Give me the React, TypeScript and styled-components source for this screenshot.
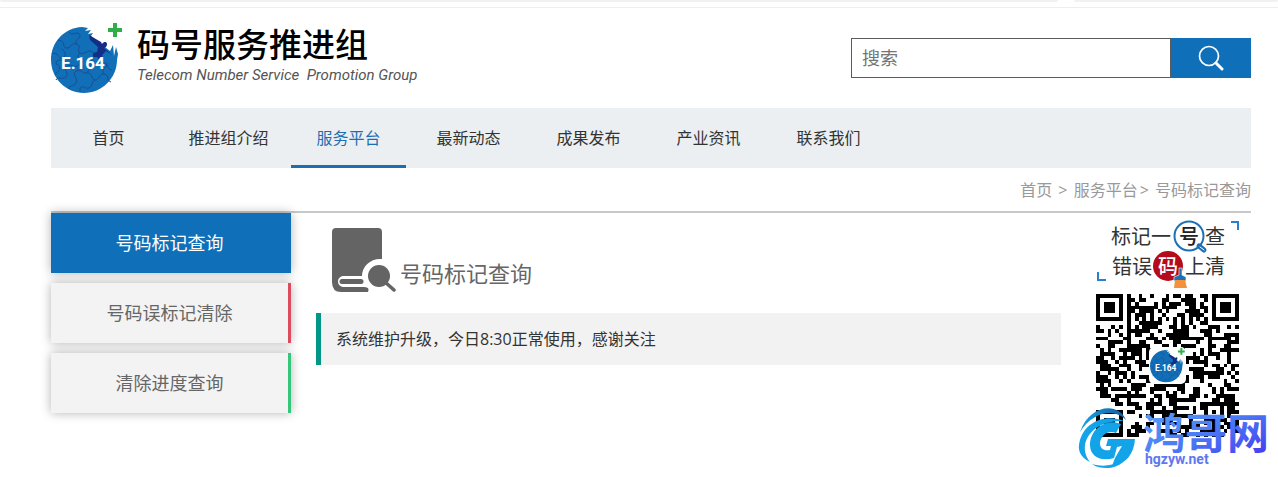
import React from "react";
import styled, { createGlobalStyle } from "styled-components";

const SANS = '"Open Sans", "Noto Sans CJK SC", sans-serif';
const BLUE = "#0f70b9";

const GlobalStyle = createGlobalStyle`
  *, *::before, *::after { box-sizing: border-box; }
  body {
    margin: 0;
    background: #fff;
    color: #333;
    font: 16px/24px ${SANS};
  }
  a { color: inherit; text-decoration: none; }
  ul, ol { list-style: none; margin: 0; padding: 0; }
`;

const TopStrip = styled.div`
  display: flex;
  gap: 16px;
  height: 8px;
  border-bottom: 1px solid #eeeeee;
`;

const StripBlock = styled.div<{ $wide?: boolean }>`
  flex: ${(p) => (p.$wide ? "1 1 auto" : "0 0 204px")};
  height: 2px;
  background: #f1f1f1;
  border-radius: 0 0 3px 3px;
`;

const Page = styled.div`
  position: relative;
  padding: 0 27px 38px 51px;
`;

const Header = styled.header`
  display: flex;
  justify-content: space-between;
  align-items: center;
  height: 100px;
`;

const Brand = styled.a`
  display: flex;
  gap: 12px;
  color: #000;
`;

const BrandText = styled.div`
  display: flex;
  flex-direction: column;
`;

const BrandName = styled.strong`
  font-size: 33px;
  line-height: 44px;
  font-weight: 500;
`;

const BrandSub = styled.em`
  font: italic 15px/16px Roboto, "Liberation Sans", sans-serif;
  color: #555;
  white-space: pre;
`;

const Search = styled.form`
  display: flex;
  width: 400px;
  height: 40px;
`;

const SearchInput = styled.input`
  flex: 1;
  min-width: 0;
  padding: 0 10px;
  border: 1px solid #5b5b5f;
  border-radius: 0;
  background: #fff;
  font: 18px/24px ${SANS};
  outline: none;
  &::placeholder { color: #757575; opacity: 1; }
`;

const SearchButton = styled.button`
  display: flex;
  align-items: center;
  justify-content: center;
  width: 80px;
  padding: 0;
  border: 0;
  background: ${BLUE};
  cursor: pointer;
`;

const Nav = styled.nav`
  background: #ebeff2;
`;

const NavList = styled.ul`
  display: flex;
  gap: 5px;
`;

const NavLink = styled.a<{ $active?: boolean }>`
  display: block;
  width: 115px;
  height: 60px;
  line-height: 60px;
  text-align: center;
  color: ${(p) => (p.$active ? "#1c6eb0" : "#333")};
  border-bottom: 3px solid ${(p) => (p.$active ? "#1c6eb0" : "transparent")};
`;

const Crumbs = styled.nav`
  height: 45px;
  line-height: 44px;
  text-align: right;
  color: #999;
  border-bottom: 2px solid #c8c8c8;
`;

const CrumbSeparator = styled.span`
  padding: 0 2px;
`;

const Content = styled.div`
  display: flex;
  align-items: flex-start;
`;

const SideMenu = styled.ul`
  display: flex;
  flex-direction: column;
  gap: 10px;
  flex: 0 0 240px;
`;

const SideLink = styled.a<{ $accent: string; $active?: boolean }>`
  display: block;
  height: 60px;
  line-height: 60px;
  font-size: 18px;
  text-align: center;
  color: ${(p) => (p.$active ? "#fff" : "#666")};
  background: ${(p) => (p.$active ? BLUE : "#f3f3f3")};
  border-right: 3px solid ${(p) => p.$accent};
  box-shadow: 0 0 10px rgba(0, 0, 0, 0.3);
`;

const Main = styled.main`
  flex: 1;
  margin: 0 35px 0 25px;
`;

const Heading = styled.h1`
  display: flex;
  align-items: flex-end;
  gap: 4px;
  height: 100px;
  margin: 0;
  padding: 0 16px 20px;
  font-size: 22px;
  line-height: 40px;
  font-weight: 400;
  color: #666;
`;

const Notice = styled.blockquote`
  margin: 0;
  padding: 14px 15px;
  border-left: 5px solid #009688;
  background: #f2f2f2;
`;

const Aside = styled.aside`
  display: flex;
  flex-direction: column;
  align-items: flex-start;
  gap: 4px;
  flex: 0 0 155px;
  padding-top: 5px;
`;

const Watermark = styled.div`
  position: absolute;
  right: 8px;
  bottom: 6px;
  display: flex;
`;

const Block = styled.svg`
  display: block;
  flex: none;
`;

function Globe() {
  return (
    <g>
      <path
        d="M31 4C13 5 0 19 0 37c0 18 15 33 33 33s33-15 33-33l1-6-2-7-2 9-1-11-3 6-19-15 2-3-5 1 3-4-6 1 3-3z"
        fill="#116fb8"
      />
      <path
        d="M7 17c8 1 4 7 8 8 5 1 5-6 11-4 5 2-1 7 3 9 4 3 8-5 13-1 4 4-4 7 0 11 3 3 7-3 12 0 4 3 2 7 7 7M18 9c3 5 9-2 11 3 1 4-7 5-3 9M1 31c7-3 5 5 10 4 6-1 3-8-1-9M4 51c6-3 6-9 1-10 0-6 7-4 10-2M29 30c-6 5 3 7-1 12-4 4-8-2-12 1-5 4 3 7-1 11-4 3-8-1-10 3M42 41c-6 1-2 7-7 9-4 1-5-5-10-2-5 4 3 7 0 12-2 4-8 2-7 6M36 50c6-1 3 6 8 7 5 0 4-7 9-6 6 1 2 7 7 8M44 57c-5 2-1 6-6 8-4 1-5-3-9 0v4M50 39c4-3-2-7 3-10M53 51c-4-5 4-6 3-11"
        fill="none"
        stroke="#174e96"
        strokeWidth="1"
      />
      <path
        d="M38 12l12 7 1 2c3-4 7-1 4 3l-2 1 8 7-6-4-4 4c2 4-3 6-5 2-6 1-5-5 0-5l1-5-8-7z"
        fill="#142d86"
      />
      <path d="M62 0h4v5h5v4h-5v5h-4V9h-5V5h5z" fill="#2fae4a" />
      <text
        x="32"
        y="46"
        textAnchor="middle"
        fontFamily='Roboto, "Liberation Sans", sans-serif'
        fontSize="17"
        fontWeight="700"
        fill="#fff"
      >
        E.164
      </text>
    </g>
  );
}

function SearchIcon() {
  return (
    <Block width="26" height="26" viewBox="0 0 26 26" fill="none" stroke="#fff" aria-hidden="true">
      <circle cx="11" cy="11" r="9.500" strokeWidth="1.700" />
      <path d="M18 18l6 6" strokeWidth="3" strokeLinecap="round" />
    </Block>
  );
}

function BookSearchIcon() {
  return (
    <Block width="64" height="65" viewBox="0 0 64 65" aria-hidden="true">
      <path
        d="M4 0h42q4 0 4 4v27C39 30 30 38 30 48H12c-8 0-8 11 0 11h20q6 0 4 5H9Q0 64 0 54V4q0-4 4-4z"
        fill="#646464"
      />
      <path d="M10 53.500h19" stroke="#646464" strokeWidth="5" strokeLinecap="round" />
      <circle cx="47" cy="48" r="11" fill="#646464" />
      <path d="M53 54l9 8" stroke="#646464" strokeWidth="3.500" strokeLinecap="round" />
    </Block>
  );
}

function Slogan() {
  return (
    <Block
      width="146"
      height="72"
      viewBox="0 0 146 72"
      role="img"
      aria-label="标记一号查 错误码上清"
      fontFamily='"Noto Sans CJK SC", sans-serif'
      fontSize="20"
      fill="#333"
    >
      <path d="M135 4h7v8M2 54v8h8" fill="none" stroke="#2a80cc" strokeWidth="2" />
      <text x="15" y="26">标记一</text>
      <text x="109" y="26">查</text>
      <text x="16" y="56">错误</text>
      <text x="89" y="56">上清</text>
      <circle cx="93" cy="18" r="14.500" fill="#fff" stroke="#1d70b5" strokeWidth="2" />
      <path d="M103 28l5 4" stroke="#1d70b5" strokeWidth="5" strokeLinecap="round" />
      <path d="M104 29l4 3" stroke="#fff" strokeWidth="1" strokeLinecap="round" />
      <text x="93" y="26" textAnchor="middle" fontWeight="500" fill="#222">号</text>
      <circle cx="72" cy="48" r="15" fill="#b50b1b" />
      <text x="72" y="56" textAnchor="middle" fontWeight="500" fill="#fff">码</text>
      <path d="M83 50h3v7l4 2v4H78v-4l5-2z" fill="#1d70b5" stroke="#fff" strokeWidth=".6" />
      <path d="M79 62h10l2 8H78z" fill="#f4913c" />
    </Block>
  );
}

const QR_SIZE = 37;

function inFinder(x: number, y: number): boolean | null {
  const corners = [[0, 0], [QR_SIZE - 7, 0], [0, QR_SIZE - 7]];
  for (const [cx, cy] of corners) {
    const dx = Math.abs(x - cx - 3);
    const dy = Math.abs(y - cy - 3);
    const ring = Math.max(dx, dy);
    if (ring <= 4) return ring === 3 || ring <= 1;
  }
  return null;
}

function qrPath(): string {
  let seed = 164;
  let d = "";
  for (let y = 0; y < QR_SIZE; y++) {
    for (let x = 0; x < QR_SIZE; x++) {
      seed = (seed * 1103515245 + 12345) % 2147483648;
      let dark = seed / 2147483648 > 0.48;
      const finder = inFinder(x, y);
      const ring = Math.max(Math.abs(x - 30), Math.abs(y - 30));
      if (finder !== null) dark = finder;
      else if (ring <= 2) dark = ring !== 1;
      else if (x === 6) dark = y % 2 === 0;
      else if (y === 6) dark = x % 2 === 0;
      if (dark) d += `M${x} ${y}h1v1h-1z`;
    }
  }
  return d;
}

const QR_PATH = qrPath();

function QrCode() {
  return (
    <Block width="143" height="143" viewBox="0 0 143 143" role="img" aria-label="E.164">
      <g transform="scale(3.865)" shapeRendering="crispEdges">
        <path d={QR_PATH} />
      </g>
      <rect x="53" y="53" width="37" height="37" rx="5" fill="#fff" />
      <g transform="translate(54 54) scale(.49)">
        <Globe />
      </g>
    </Block>
  );
}

function SiteMark() {
  return (
    <Block width="193" height="62" viewBox="0 0 193 62" role="img" aria-label="鸿哥网 hgzyw.net">
      <defs>
        <linearGradient id="markText" x1="0" y1="0" x2="1" y2="1">
          <stop offset="0" stopColor="#58a8fa" />
          <stop offset=".5" stopColor="#4b7cf6" />
          <stop offset="1" stopColor="#4634ee" />
        </linearGradient>
        <linearGradient id="markArc" x1="0" y1="0" x2="1" y2="0">
          <stop offset="0" stopColor="#18a5e8" />
          <stop offset="1" stopColor="#125a9c" />
        </linearGradient>
      </defs>
      <path d="M3 25C12-2 41-6 49 13 36 0 15 6 3 25z" fill="url(#markArc)" />
      <path d="M2 38C5 16 27 6 47 14 24 13 10 25 8 38c-1 8 2 13 5 17C5 51 1 45 2 38z" fill="#12a3e8" />
      <path
        d="M44 17l-5 9c-8-3-15 2-16 10 0 6 4 8 10 7l1-4h-5l2-7h27c-1 15-9 25-23 27l3-8 7-12-5 1-3 11c-12 4-24-1-24-13 0-16 16-27 31-21z"
        fill="#12a3e8"
      />
      <path d="M15 57c17 5 33-1 40-19-3 15-13 23-25 23-6 0-11-1-15-4z" fill="#12a3e8" />
      <text
        x="66"
        y="42"
        fontFamily='"Noto Sans CJK SC", sans-serif'
        fontSize="42"
        fontWeight="700"
        fill="url(#markText)"
      >
        鸿哥网
      </text>
      <text x="68" y="57" fontFamily="Roboto, sans-serif" fontSize="14" fontWeight="700" fill="#6078ef">
        hgzyw.net
      </text>
    </Block>
  );
}

const NAV = ["首页", "推进组介绍", "服务平台", "最新动态", "成果发布", "产业资讯", "联系我们"];

const SIDE = [
  { label: "号码标记查询", accent: BLUE, active: true },
  { label: "号码误标记清除", accent: "#dc4c5c" },
  { label: "清除进度查询", accent: "#34c77b" },
];

export default function App() {
  return (
    <>
      <GlobalStyle />
      <TopStrip>
        <StripBlock $wide />
        <StripBlock />
      </TopStrip>
      <Page>
        <Header>
          <Brand href="#">
            <Block width="74" height="70" viewBox="0 0 74 70" aria-hidden="true">
              <Globe />
            </Block>
            <BrandText>
              <BrandName>码号服务推进组</BrandName>
              <BrandSub>{"Telecom Number Service  Promotion Group"}</BrandSub>
            </BrandText>
          </Brand>
          <Search role="search" onSubmit={(e) => e.preventDefault()}>
            <SearchInput type="text" placeholder="搜索" aria-label="搜索" />
            <SearchButton type="submit" aria-label="搜索">
              <SearchIcon />
            </SearchButton>
          </Search>
        </Header>
        <Nav>
          <NavList>
            {NAV.map((label) => (
              <li key={label}>
                <NavLink href="#" $active={label === "服务平台"}>{label}</NavLink>
              </li>
            ))}
          </NavList>
        </Nav>
        <Crumbs>
          <a href="#">首页</a> <CrumbSeparator>&gt;</CrumbSeparator> <a href="#">服务平台</a>
          <CrumbSeparator>&gt;</CrumbSeparator> <a href="#">号码标记查询</a>
        </Crumbs>
        <Content>
          <SideMenu>
            {SIDE.map((item) => (
              <li key={item.label}>
                <SideLink href="#" $accent={item.accent} $active={item.active}>{item.label}</SideLink>
              </li>
            ))}
          </SideMenu>
          <Main>
            <Heading>
              <BookSearchIcon />
              <span>号码标记查询</span>
            </Heading>
            <Notice>系统维护升级，今日8:30正常使用，感谢关注</Notice>
          </Main>
          <Aside>
            <Slogan />
            <QrCode />
          </Aside>
        </Content>
        <Watermark>
          <SiteMark />
        </Watermark>
      </Page>
    </>
  );
}
